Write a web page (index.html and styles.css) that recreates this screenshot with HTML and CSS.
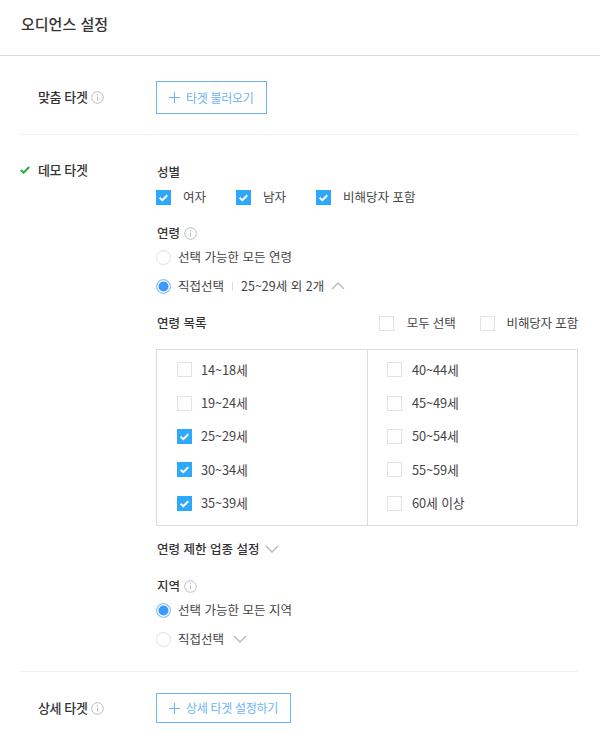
FILE: index.html
```html
<!DOCTYPE html>
<html lang="ko">
<head>
<meta charset="utf-8">
<title>오디언스 설정</title>
<link rel="stylesheet" href="styles.css">
</head>
<body>
<svg class="defs" width="0" height="0" aria-hidden="true">
  <defs>
    <symbol id="info" viewBox="0 0 13 13"><circle cx="6.5" cy="6.5" r="5.8" fill="none" stroke="#bdbdbd"/><path d="M6.5 5.6v4M6.5 3.2v1.2" stroke="#bdbdbd" fill="none"/></symbol>
    <symbol id="tick" viewBox="0 0 15 15"><rect width="15" height="15" fill="#2ea8fb"/><path d="M3.6 7.8l2.7 2.4 5-5" fill="none" stroke="#fff" stroke-width="2"/></symbol>
    <symbol id="plus" viewBox="0 0 11 11"><path d="M5.5 0v11M0 5.5h11" stroke="#6db3f5" fill="none"/></symbol>
    <symbol id="down" viewBox="0 0 14 8"><path d="M1 1l6 6 6-6" stroke="#b4b8bd" stroke-width="1.3" fill="none"/></symbol>
    <symbol id="up" viewBox="0 0 14 8"><path d="M1 7l6-6 6 6" stroke="#b4b8bd" stroke-width="1.3" fill="none"/></symbol>
  </defs>
</svg>
<header class="title-bar"><h1 class="title">오디언스 설정</h1></header>
<main class="body">
  <section class="row row-custom">
    <div class="row-label"><span class="label-text">맞춤 타겟</span><svg class="info"><use href="#info"/></svg></div>
    <button class="add-btn"><svg class="plus"><use href="#plus"/></svg>타겟 불러오기</button>
  </section>
  <section class="row row-demo">
    <div class="row-label label-demo">
      <svg class="green-check" viewBox="0 0 10 8"><path d="M.8 4l2.8 2.6L9.2 1" fill="none" stroke="#22ac38" stroke-width="2"/></svg>
      <span class="label-text">데모 타겟</span>
    </div>
    <div class="demo-content">
      <h2 class="sub sub-gender">성별</h2>
      <div class="gender-row">
        <label class="check gender-1"><svg class="box"><use href="#tick"/></svg>여자</label>
        <label class="check gender-2"><svg class="box"><use href="#tick"/></svg>남자</label>
        <label class="check"><svg class="box"><use href="#tick"/></svg>비해당자 포함</label>
      </div>
      <h2 class="sub sub-age">연령<svg class="info"><use href="#info"/></svg></h2>
      <div class="radio-line line-first"><span class="radio"></span>선택 가능한 모든 연령</div>
      <div class="radio-line line-second"><span class="radio on"></span>직접선택<span class="sep"></span>25~29세 외 2개<svg class="chev chev-up"><use href="#up"/></svg></div>
      <div class="list-head">
        <h2 class="sub">연령 목록</h2>
        <div class="list-opts">
          <label class="check check-all"><span class="box empty"></span>모두 선택</label>
          <label class="check check-na"><span class="box empty"></span>비해당자 포함</label>
        </div>
      </div>
      <div class="age-table">
        <div class="age-col">
          <label class="check age"><span class="box empty"></span>14~18세</label>
          <label class="check age"><span class="box empty"></span>19~24세</label>
          <label class="check age"><svg class="box"><use href="#tick"/></svg>25~29세</label>
          <label class="check age"><svg class="box"><use href="#tick"/></svg>30~34세</label>
          <label class="check age"><svg class="box"><use href="#tick"/></svg>35~39세</label>
        </div>
        <div class="age-col age-col-right">
          <label class="check age"><span class="box empty"></span>40~44세</label>
          <label class="check age"><span class="box empty"></span>45~49세</label>
          <label class="check age"><span class="box empty"></span>50~54세</label>
          <label class="check age"><span class="box empty"></span>55~59세</label>
          <label class="check age"><span class="box empty"></span>60세 이상</label>
        </div>
      </div>
      <h2 class="sub sub-limit">연령 제한 업종 설정<svg class="chev chev-limit"><use href="#down"/></svg></h2>
      <h2 class="sub sub-region">지역<svg class="info"><use href="#info"/></svg></h2>
      <div class="radio-line line-first"><span class="radio on"></span>선택 가능한 모든 지역</div>
      <div class="radio-line line-second"><span class="radio"></span>직접선택<svg class="chev chev-region"><use href="#down"/></svg></div>
    </div>
  </section>
  <section class="row row-detail">
    <div class="row-label"><span class="label-text">상세 타겟</span><svg class="info"><use href="#info"/></svg></div>
    <button class="add-btn add-detail"><svg class="plus"><use href="#plus"/></svg>상세 타겟 설정하기</button>
  </section>
</main>
</body>
</html>
```
FILE: styles.css
```css
* { box-sizing: border-box; }
html, body { margin: 0; padding: 0; background: #fff; }
body {
  width: 600px;
  height: 743px;
  overflow: hidden;
  font-family: "Noto Sans CJK KR", "Noto Sans", sans-serif;
  font-size: 13px;
  color: #444;
  line-height: 18px;
}
.defs { position: absolute; }
.title-bar { height: 56px; border-bottom: 1px solid #dcdce0; padding: 13px 21px 0; }
.title { margin: 0; font-size: 15px; line-height: 22px; font-weight: 500; color: #333; }
.body { padding: 0 22px 0 20px; }
.row { display: flex; border-bottom: 1px solid #f0f0f0; }
.row-label { width: 136px; flex: none; display: flex; align-items: center; padding-left: 18px; }
.label-text { font-size: 13px; font-weight: 500; color: #333; letter-spacing: -.4px; }
.info { width: 13px; height: 13px; margin-left: 4px; flex: none; }
.row-custom { height: 79px; padding-top: 25px; align-items: flex-start; }
.row-custom .row-label { height: 32px; }
.add-btn {
  height: 33px;
  width: 111px;
  padding: 0 0 0 12px;
  display: flex;
  align-items: center;
  background: #fff;
  border: 1px solid #6db3f5;
  border-radius: 0;
  font: inherit;
  font-size: 12px;
  letter-spacing: -.3px;
  color: #6db3f5;
  white-space: nowrap;
}
.plus { width: 11px; height: 11px; margin-right: 6px; flex: none; }
.row-demo { height: 537px; padding-top: 27px; }
.label-demo { height: 16px; padding-left: 0; }
.green-check { width: 10px; height: 8px; margin-right: 8px; flex: none; }
.demo-content { flex: 1; min-width: 0; }
.sub { margin: 0; display: flex; align-items: center; font-size: 12.5px; line-height: 18px; font-weight: 500; color: #333; padding-left: 1px; }
.sub-gender { margin-top: 1px; }
.gender-row { display: flex; margin-top: 7px; }
.check { display: flex; align-items: center; font-size: 12.5px; color: #444; }
.box { width: 15px; height: 15px; flex: none; margin-right: 12px; }
.box.empty { border: 1px solid #e2e2e2; background: #fff; }
.gender-1, .gender-2 { width: 80px; }
.sub-age { margin-top: 18px; }
.radio-line { display: flex; align-items: center; font-size: 12.5px; color: #444; height: 18px; }
.line-first { margin-top: 6px; }
.line-second { margin-top: 11px; }
.radio { width: 15px; height: 15px; border-radius: 50%; border: 1px solid #e2e2e2; margin: 0 7px 0 0; flex: none; background: #fff; }
.radio.on { border: 1px solid #9ccdfa; background: #3b99fc; box-shadow: inset 0 0 0 1.5px #fff; }
.sep { width: 1px; height: 9px; background: #dcdcdc; margin: 0 8px; flex: none; }
.chev { width: 14px; height: 8px; flex: none; }
.chev-up { margin-left: 7px; }
.list-head { display: flex; justify-content: space-between; align-items: center; margin-top: 19px; }
.list-opts { display: flex; letter-spacing: -.15px; }
.check-all { margin-right: 24px; }
.check-all .box { margin-right: 13px; }
.check-na .box { margin-right: 12px; }
.age-table { display: flex; margin-top: 17px; height: 177px; border: 1px solid #dcdce0; }
.age-col { flex: 1 1 0; padding: 3px 0 0 20px; }
.age-col-right { border-left: 1px solid #dcdce0; padding-left: 19px; }
.age { height: 33.4px; font-size: 12.8px; letter-spacing: -.1px; }
.age .box { margin-right: 9px; }
.age-col-right .box { margin-right: 10px; }
.sub-limit { margin-top: 14px; }
.chev-limit { margin-left: 5px; }
.sub-region { margin-top: 19px; }
.chev-region { margin-left: 9px; }
.row-detail { border-bottom: 0; padding-top: 21px; align-items: flex-start; }
.row-detail .row-label { height: 30px; }
.add-detail { width: 135px; height: 30px; }
```
